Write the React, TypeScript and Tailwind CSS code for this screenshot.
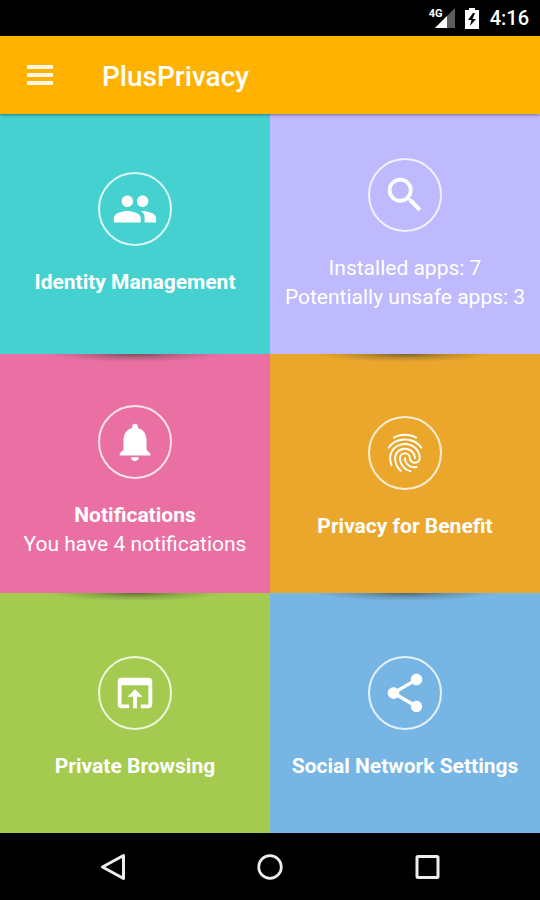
import React from 'react';
import {
  MdFingerprint,
  MdNotifications,
  MdOpenInBrowser,
  MdPeople,
  MdSearch,
  MdShare,
} from 'react-icons/md';

interface TileProps {
  color: string;
  icon: React.ReactNode;
  title?: string;
  lines?: string[];
  shadow?: boolean;
  padding?: string;
}

const Tile: React.FC<TileProps> = ({ color, icon, title, lines = [], shadow, padding = 'pt-0.5' }) => (
  <button
    className={`relative flex flex-col items-center justify-center overflow-hidden text-[21px] leading-[29px] text-white ${color} ${padding}`}
  >
    {shadow && (
      <span className="absolute inset-x-12 top-0 h-2 bg-[radial-gradient(ellipse_50%_100%_at_50%_0%,rgba(60,60,50,0.65),rgba(60,60,50,0.25)_50%,transparent)]" />
    )}
    <span className="mb-[22px] flex h-[74px] w-[74px] items-center justify-center rounded-full border-2 border-white/80">
      {icon}
    </span>
    {title && <span className="font-bold">{title}</span>}
    {lines.map((line) => (
      <span key={line} className="whitespace-nowrap">{line}</span>
    ))}
  </button>
);

const StatusBar = () => (
  <div className="flex h-9 items-center justify-end bg-black pr-[11px] text-white">
    <div className="relative mr-[10px] h-5 w-[26px]">
      <svg viewBox="0 0 26 20" className="h-5 w-[26px]">
        <path d="M26 0v20H6z" fill="#5c5c5c" />
        <path d="M18 8v12H6z" fill="#fff" />
      </svg>
      <span className="absolute top-0 left-0 text-[11px] leading-3 font-bold">4G</span>
    </div>
    <svg viewBox="0 0 14 21" className="mr-[11px] h-[21px] w-[14px]">
      <path d="M4 0h6v2h4v19H0V2h4z" fill="#fff" />
      <path d="M8 5L3 12h3.500L5 18l6-7H7.500L10 5z" fill="#000" />
    </svg>
    <span className="text-[20px] leading-6 font-medium">4:16</span>
  </div>
);

const NavBar = () => (
  <nav className="flex h-[67px] items-center justify-center gap-[117px] bg-black">
    <button aria-label="Back" className="h-10 w-10">
      <svg viewBox="0 0 40 40" fill="none" stroke="#eee" strokeWidth="3" strokeLinejoin="round">
        <path d="M9.500 20L30.500 8.500v23z" />
      </svg>
    </button>
    <button aria-label="Home" className="h-10 w-10">
      <svg viewBox="0 0 40 40" fill="none" stroke="#eee" strokeWidth="2.700">
        <circle cx="20" cy="20" r="11.300" />
      </svg>
    </button>
    <button aria-label="Recent apps" className="h-10 w-10">
      <svg viewBox="0 0 40 40" fill="none" stroke="#eee" strokeWidth="3">
        <rect x="10" y="9.500" width="21" height="21" rx="1" />
      </svg>
    </button>
  </nav>
);

export default function App() {
  return (
    <div className="flex min-h-screen flex-col font-['Roboto',sans-serif]">
      <StatusBar />
      <header className="relative z-10 flex h-[78px] items-center bg-[#ffb300] pt-1 pl-[22px] text-white shadow-[0_1px_3px_rgba(0,0,0,0.4)]">
        <button aria-label="Open menu" className="mb-1 text-white/90">
          <svg viewBox="0 0 36 36" className="h-9 w-9" fill="currentColor">
            <path d="M5 8h26v4H5zM5 16h26v4H5zM5 24h26v4H5z" />
          </svg>
        </button>
        <h1 className="ml-11 text-[28px] leading-9 font-medium">PlusPrivacy</h1>
      </header>
      <main className="grid flex-1 grid-cols-2 grid-rows-3">
        <Tile color="bg-[#45d1d0]" icon={<MdPeople size={46} />} title="Identity Management" />
        <Tile
          color="bg-[#bfb9fd]"
          icon={<MdSearch size={46} />}
          lines={['Installed apps: 7', 'Potentially unsafe apps: 3']}
        />
        <Tile
          color="bg-[#ea6fa3]"
          icon={<MdNotifications size={46} />}
          title="Notifications"
          lines={['You have 4 notifications']}
          padding="pt-[18px]"
          shadow
        />
        <Tile
          color="bg-[#eba72b]"
          icon={<MdFingerprint size={46} />}
          title="Privacy for Benefit"
          padding="pt-2.5"
          shadow
        />
        <Tile
          color="bg-[#a4cb50]"
          icon={<MdOpenInBrowser size={46} />}
          title="Private Browsing"
          padding="pt-2.5"
          shadow
        />
        <Tile
          color="bg-[#76b5e4]"
          icon={<MdShare size={46} />}
          title="Social Network Settings"
          padding="pt-2.5"
          shadow
        />
      </main>
      <NavBar />
    </div>
  );
}
